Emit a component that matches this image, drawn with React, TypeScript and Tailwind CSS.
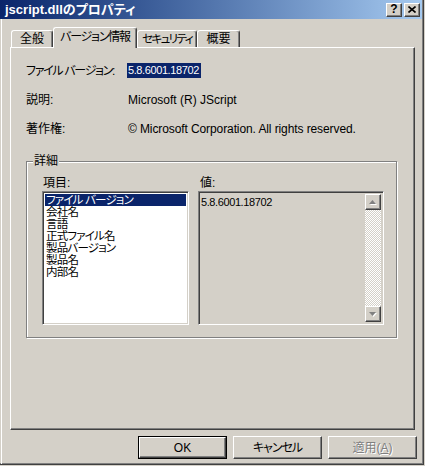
import React from "react";

const raised =
  "border border-t-white border-l-white border-r-[#404040] border-b-[#404040] shadow-[inset_-1px_-1px_#808080]";
const sunken =
  "border border-t-[#808080] border-l-[#808080] border-r-white border-b-white shadow-[inset_1px_1px_#404040,inset_-1px_-1px_#d4d0c8]";
const palt = '[font-feature-settings:"palt"_1]';

function Tab({ label, w, selected, track = "" }: { label: string; w: string; selected?: boolean; track?: string }) {
  if (selected) {
    return (
      <div
        className={`${w} h-[21px] -mb-px relative z-10 bg-[#d4d0c8] border-l border-t border-r border-l-white border-t-white border-r-[#404040] shadow-[inset_-1px_0_#808080] rounded-t-[3px] flex items-start justify-center pt-[1px]`}
      >
        <span className={`leading-[16px] whitespace-nowrap ${track}`}>{label}</span>
      </div>
    );
  }
  return (
    <div
      className={`${w} h-[17px] bg-[#d4d0c8] border-l border-t border-r border-l-white border-t-white border-r-[#404040] shadow-[inset_-1px_0_#808080] rounded-t-[3px] flex items-start justify-center overflow-hidden`}
    >
      <span className={`leading-[16px] whitespace-nowrap ${track}`}>{label}</span>
    </div>
  );
}

function Arrow({ up }: { up?: boolean }) {
  return (
    <svg width="8" height="5" viewBox="0 0 8 5" className="block">
      {up ? (
        <>
          <polygon points="4.5,1 8,5 1,5" fill="#ffffff" />
          <polygon points="3.5,0 7,4 0,4" fill="#808080" />
        </>
      ) : (
        <>
          <polygon points="1,1 8,1 4.5,5" fill="#ffffff" />
          <polygon points="0,0 7,0 3.5,4" fill="#808080" />
        </>
      )}
    </svg>
  );
}

export default function App() {
  const items = ["ファイル バージョン", "会社名", "言語", "正式ファイル名", "製品バージョン", "製品名", "内部名"];
  return (
    <div
      className={`w-[425px] h-[466px] bg-[#d4d0c8] overflow-hidden text-[12px] text-black font-['Liberation_Sans','Noto_Sans_CJK_JP',sans-serif] ${palt}`}
    >
      <div className="w-[424px] h-[465px] border-r border-b border-r-[#404040] border-b-[#404040] shadow-[inset_-1px_-1px_#808080] flex flex-col">
        {/* Title bar */}
        <div className="h-[19px] w-[422px] bg-gradient-to-r from-[#0a246a] to-[#a6caf0] flex items-center pl-[5px] pr-[2px]">
          <span className="text-white font-bold text-[13px] leading-[19px] whitespace-nowrap">jscript.dllのプロパティ</span>
          <div className="ml-auto flex gap-[2px]">
            <div className={`w-[16px] h-[14px] bg-[#d4d0c8] ${raised} flex items-center justify-center`}>
              <span className="font-bold text-[12px] leading-[11px]">?</span>
            </div>
            <div className={`w-[16px] h-[14px] bg-[#d4d0c8] ${raised} flex items-center justify-center`}>
              <svg width="8" height="7" viewBox="0 0 8 7">
                <path d="M0.5 0.5L7.5 6.5M7.5 0.5L0.5 6.5" stroke="#000" strokeWidth="1.6" />
              </svg>
            </div>
          </div>
        </div>

        {/* Body */}
        <div className="flex-1 border-l border-l-white ml-px flex flex-col">
          {/* Tabs */}
          <div className="flex items-end h-[20px] mt-[8px] pl-[9px]">
            <Tab label="全般" w="w-[42px]" />
            <Tab label="バージョン情報" w="w-[84px]" selected track="tracking-[-1.2px]" />
            <Tab label="セキュリティ" w="w-[60px]" track="tracking-[-1.6px] text-[11.5px]" />
            <Tab label="概要" w="w-[43px]" />
          </div>

          {/* Tab panel */}
          <div className="ml-[8px] w-[405px] h-[383px] border border-l-white border-t-white border-r-[#404040] border-b-[#404040] shadow-[inset_-1px_-1px_#808080] flex flex-col px-[15px] pt-[15px]">
            <div className="flex flex-col gap-[14px]">
              <div className="flex h-[15px] items-center whitespace-nowrap">
                <span className="w-[101px] tracking-[-1.3px]">ファイル バージョン:</span>
                <span className="bg-[#0a246a] text-white h-[15px] leading-[15px] text-[11px] tracking-[-0.4px] pl-[1px] pr-[2px]">5.8.6001.18702</span>
              </div>
              <div className="flex h-[15px] items-center whitespace-nowrap">
                <span className="w-[101px]">説明:</span>
                <span className="pl-[1px]">Microsoft (R) JScript</span>
              </div>
              <div className="flex h-[15px] items-center whitespace-nowrap">
                <span className="w-[101px]">著作権:</span>
                <span className="pl-[1px] tracking-[-0.1px]">© Microsoft Corporation. All rights reserved.</span>
              </div>
            </div>

            {/* Group box */}
            <div className="relative mt-[25px] w-[371px] h-[177px] border border-[#808080] shadow-[1px_1px_0_#ffffff,inset_1px_1px_0_#ffffff] pl-[15px] pt-[14px]">
              <span className="absolute -top-[8px] left-[6px] bg-[#d4d0c8] px-[1px] leading-[14px]">詳細</span>
              <div className="flex gap-[9px]">
                <div className="flex flex-col">
                  <span className="h-[15px] leading-[14px] pl-[1px]">項目:</span>
                  <div className={`w-[147px] h-[134px] bg-white ${sunken} p-[2px] flex flex-col`}>
                    {items.map((t, i) => (
                      <div
                        key={t}
                        className={`h-[12px] text-[11.5px] leading-[12px] pl-[1px] whitespace-nowrap overflow-hidden tracking-[-0.8px] ${i === 0 ? "bg-[#0a246a] text-white" : ""}`}
                      >
                        {t}
                      </div>
                    ))}
                  </div>
                </div>
                <div className="flex flex-col">
                  <span className="h-[15px] leading-[14px] pl-[2px]">値:</span>
                  <div className={`w-[186px] h-[134px] bg-[#d4d0c8] ${sunken} p-[2px] flex`}>
                    <div className="flex-1 leading-[14px] text-[11px] tracking-[-0.4px] pt-[1px]">5.8.6001.18702</div>
                    <div className="w-[16px] flex flex-col bg-[image:repeating-conic-gradient(#ffffff_0%_25%,#d4d0c8_0%_50%)] bg-[length:2px_2px]">
                      <div className={`h-[16px] bg-[#d4d0c8] ${raised} flex items-center justify-center`}>
                        <Arrow up />
                      </div>
                      <div className="flex-1" />
                      <div className={`h-[16px] bg-[#d4d0c8] ${raised} flex items-center justify-center`}>
                        <Arrow />
                      </div>
                    </div>
                  </div>
                </div>
              </div>
            </div>
          </div>

          {/* Buttons */}
          <div className="flex justify-end gap-[6px] mt-[6px] pr-[6px]">
            <div className="w-[89px] h-[23px] border border-black">
              <div className={`w-full h-full ${raised} flex items-center justify-center`}>OK</div>
            </div>
            <div className={`w-[89px] h-[23px] ${raised} flex items-center justify-center tracking-[-1px]`}>キャンセル</div>
            <div className={`w-[89px] h-[23px] ${raised} flex items-center justify-center text-[#808080] [text-shadow:1px_1px_0_#ffffff]`}>
              適用(<span className="underline">A</span>)
            </div>
          </div>
        </div>
      </div>
    </div>
  );
}
